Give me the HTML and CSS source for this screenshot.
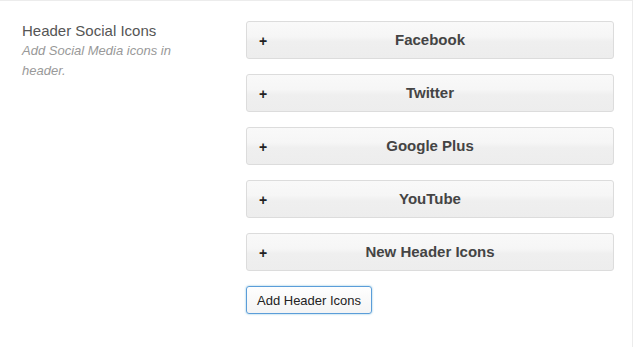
FILE: index.html
```html
<!DOCTYPE html>
<html>
<head>
<meta charset="utf-8">
<link rel="stylesheet" href="styles.css">
</head>
<body>
<div class="panel">
  <div class="row">
    <div class="label-col">
      <div class="title">Header Social Icons</div>
      <div class="desc">Add Social Media icons in header.</div>
    </div>
    <div class="field-col">
      <div class="bar"><span class="plus">+</span><span class="bar-title">Facebook</span></div>
      <div class="bar"><span class="plus">+</span><span class="bar-title">Twitter</span></div>
      <div class="bar"><span class="plus">+</span><span class="bar-title">Google Plus</span></div>
      <div class="bar"><span class="plus">+</span><span class="bar-title">YouTube</span></div>
      <div class="bar"><span class="plus">+</span><span class="bar-title">New Header Icons</span></div>
      <button class="add-btn">Add Header Icons</button>
    </div>
  </div>
</div>
</body>
</html>
```
FILE: styles.css
```css
html, body {
  margin: 0;
  padding: 0;
  background: #fff;
  font-family: "Liberation Sans", Arial, sans-serif;
}
.panel {
  width: 633px;
  height: 347px;
  box-sizing: border-box;
  border-top: 1px solid #ececec;
  border-right: 1px solid #ececec;
}
.row {
  display: flex;
  padding-top: 20px;
}
.label-col {
  flex: 0 0 224px;
  padding-left: 22px;
}
.title {
  font-size: 15px;
  line-height: 20px;
  color: #555;
}
.desc {
  font-size: 13px;
  line-height: 20px;
  font-style: italic;
  color: #999;
  width: 160px;
}
.field-col {
  flex: 0 0 368px;
  display: flex;
  flex-direction: column;
  align-items: flex-start;
  gap: 15px;
}
.bar {
  position: relative;
  width: 100%;
  height: 38px;
  box-sizing: border-box;
  border: 1px solid #dcdcdc;
  border-radius: 3px;
  background: linear-gradient(to bottom, #f9f9f9 0%, #f6f6f6 40%, #efefef 55%, #ededed 100%);
  display: flex;
  align-items: center;
  justify-content: center;
}
.plus {
  position: absolute;
  left: 12px;
  top: 9px;
  font-size: 14px;
  font-weight: bold;
  line-height: 20px;
  color: #222;
}
.bar-title {
  font-size: 15px;
  font-weight: bold;
  color: #444;
  line-height: 20px;
}
.add-btn {
  height: 28px;
  padding: 0 10px;
  font-family: "Liberation Sans", Arial, sans-serif;
  font-size: 13px;
  color: #222;
  background: linear-gradient(to bottom, #fefefe, #f4f4f4);
  border: 1px solid #5b9dd9;
  border-radius: 3px;
  box-shadow: 0 0 2px rgba(30, 140, 190, 0.6);
}
```
